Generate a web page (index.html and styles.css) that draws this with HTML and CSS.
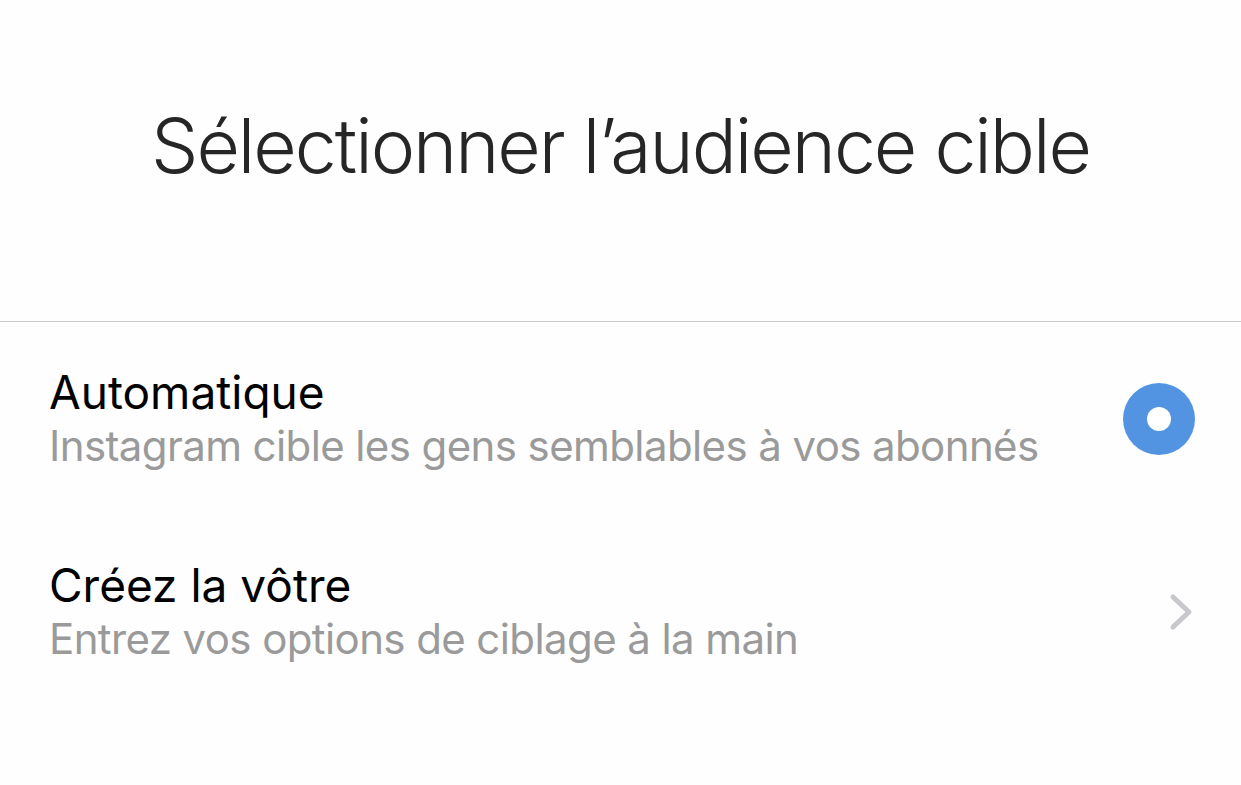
FILE: index.html
```html
<!DOCTYPE html>
<html lang="fr">
<head>
    <meta charset="UTF-8">
    <meta name="viewport" content="width=device-width, initial-scale=1.0">
    <title>Sélectionner l’audience cible</title>
    <link rel="stylesheet" href="styles.css">
</head>
<body>
    <div class="header">
        <h1>Sélectionner l’audience cible</h1>
    </div>

    <div class="options">
        <div class="option">
            <div class="option-text">
                <div class="option-title">Automatique</div>
                <div class="option-sub">Instagram cible les gens semblables à vos abonnés</div>
            </div>
            <div class="radio selected"></div>
        </div>
        <div class="option">
            <div class="option-text">
                <div class="option-title">Créez la vôtre</div>
                <div class="option-sub">Entrez vos options de ciblage à la main</div>
            </div>
            <svg class="chevron" width="26" height="38" viewBox="0 0 26 38">
                <path d="M4 4 L20 19 L4 34" fill="none" stroke="#c7c7cc" stroke-width="5" stroke-linecap="round" stroke-linejoin="round"/>
            </svg>
        </div>
    </div>
</body>
</html>
```

FILE: styles.css
```css
body {
    margin: 0;
    padding: 0;
    background: #fefefe;
    font-family: Inter, "Noto Sans", sans-serif;
}

.header {
    height: 321px;
    border-bottom: 1px solid #c8c8c8;
    display: flex;
    justify-content: center;
    align-items: center;
}

h1 {
    margin: 0 0 30px 0;
    font-size: 75px;
    font-weight: 300;
    color: #262626;
    letter-spacing: -2px;
}

.options {
    padding: 0 46px 0 49px;
}

.option {
    display: flex;
    align-items: center;
    justify-content: space-between;
    height: 193px;
}

.option-title {
    font-size: 46px;
    color: #000;
    line-height: 54px;
}

.option-sub {
    font-size: 42px;
    color: #9a9a9a;
    line-height: 54px;
    letter-spacing: -0.6px;
}

.radio {
    width: 72px;
    height: 72px;
    border-radius: 50%;
    box-sizing: border-box;
}

.radio.selected {
    background: #5294e2;
    display: flex;
    align-items: center;
    justify-content: center;
}

.radio.selected::after {
    content: "";
    width: 24px;
    height: 24px;
    border-radius: 50%;
    background: #fff;
}
```
